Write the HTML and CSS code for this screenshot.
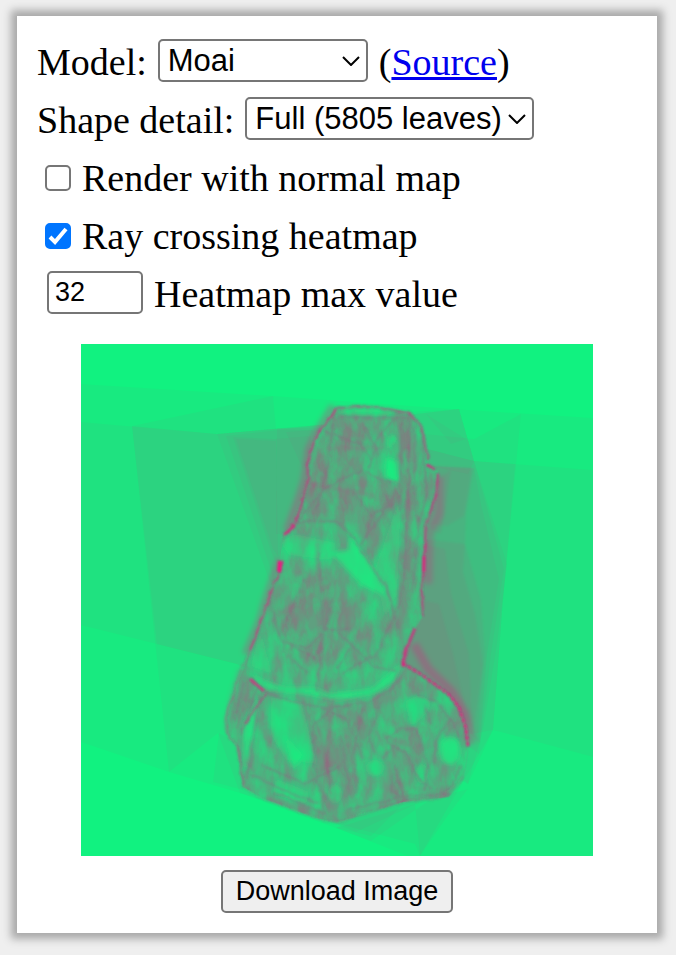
FILE: index.html
```html
<!DOCTYPE html>
<html lang="en">
<head>
<meta charset="utf-8">
<title>Ray crossing heatmap</title>
<link rel="stylesheet" href="styles.css">
</head>
<body>
<main class="panel">
  <form class="controls">
    <div class="row">
      <label for="model">Model:</label>
      <select id="model" class="field select model"><option>Moai</option></select>
      <span>(<a href="#source">Source</a>)</span>
    </div>
    <div class="row">
      <label for="detail">Shape detail:</label>
      <select id="detail" class="field select detail"><option>Full (5805 leaves)</option></select>
    </div>
    <div class="row">
      <input type="checkbox" class="check" id="normals">
      <label for="normals">Render with normal map</label>
    </div>
    <div class="row">
      <input type="checkbox" class="check" id="heat" checked>
      <label for="heat">Ray crossing heatmap</label>
    </div>
    <div class="row">
      <input type="text" inputmode="numeric" class="field number" id="max" value="32">
      <label for="max">Heatmap max value</label>
    </div>
  </form>
  <svg class="render" viewBox="0 0 512 512" role="img" aria-label="Moai heatmap">
    <defs>
      <filter id="soft1" x="-20%" y="-20%" width="140%" height="140%"><feGaussianBlur stdDeviation="1"/></filter>
      <filter id="soft2" x="-20%" y="-20%" width="140%" height="140%"><feGaussianBlur stdDeviation="2.5"/></filter>
      <filter id="hot" x="0" y="0" width="100%" height="100%" color-interpolation-filters="sRGB">
        <feTurbulence type="fractalNoise" baseFrequency="0.07 0.03" numOctaves="4" seed="7"/>
        <feColorMatrix values="0 0 0 0 1  0 0 0 0 0  0 0 0 0 0.5  1.3 0 0 0 -0.45"/>
      </filter>
      <filter id="cool" x="0" y="0" width="100%" height="100%" color-interpolation-filters="sRGB">
        <feTurbulence type="fractalNoise" baseFrequency="0.07 0.035" numOctaves="4" seed="21"/>
        <feColorMatrix values="0 0 0 0 0.07  0 0 0 0 0.95  0 0 0 0 0.5  0 2.2 0 0 -0.8"/>
      </filter>
      <filter id="rough" x="-10%" y="-10%" width="120%" height="120%">
        <feTurbulence type="fractalNoise" baseFrequency="0.12" numOctaves="2" seed="3"/>
        <feDisplacementMap in="SourceGraphic" scale="4" xChannelSelector="R" yChannelSelector="G"/>
        <feGaussianBlur stdDeviation="0.8"/>
      </filter>
      <path id="body" d="M254 63L244 80 232 100 227 123 227 133 221 157 214 180 202 191 199 217 196 233 187 256 181 276 169 306 162 326 146 366 144 386 156 403 159 423 162 443 186 456 232 473 255 479 275 473 322 458 368 453 382 436 387 403 385 384 378 364 368 351 355 339 338 329 322 319 327 299 335 283 341 273 342 256 341 247 343 213 344 182 350 163 355 143 357 127 347 122 342 88 328 68 298 63 275 61Z"/>
      <clipPath id="inside"><use href="#body"/></clipPath>
    </defs>
    <rect width="512" height="512" fill="#11f280"/>
    <!-- bounding volumes: each one crossed adds a step of heat -->
    <g fill="#ff0080" fill-opacity=".033">
      <path d="M0 40L192 52 372 65 512 74V512H327L255 484 159 449 88 428 0 398Z"/>
      <path d="M0 78L136 90 250 80 393 117 512 126V413L412 386 339 400 156 320 76 300 0 281Z"/>
      <path d="M51 82L192 52 195 85 345 90 393 95 440 70 422 256 412 386 339 512 334 500 250 478 159 449 137 389 88 428Z"/>
      <path d="M51 82L136 90 250 80 393 117 434 120 422 256 412 386 387 440 162 326 156 320 76 300Z"/>
      <path d="M136 90L255 79 378 65 393 117 426 220 416 300 402 386 387 440 200 260 187 233Z"/>
      <path d="M145 92L250 80 378 65 393 117 423 225 410 310 398 410 200 260 188 220Z"/>
      <path d="M152 93L194 95 230 92 225 140 197 222 191 210Z"/>
      <path d="M155 95L195 97 197 212 192 205Z"/>
      <path d="M196 84H240L242 90 225 140 204 190 195 190Z"/>
      <path d="M205 88L232 86 222 125Z"/>
      <path d="M328 68L378 65 393 117 387 130 340 120Z"/>
      <path d="M345 70L385 95 370 100Z"/>
      <path d="M138 389L160 400 162 446 132 438Z"/>
      <path d="M255 484L290 497 350 455 387 445 368 470 339 512 334 460Z"/>
      <path d="M255 480L275 488 335 460 368 453 340 450Z"/>
      <path d="M255 484L290 492 322 460 300 455Z"/>
      <path d="M347 122L393 124 400 160 418 235 406 310 399 400 385 384 322 319 342 256Z"/>
    </g>
    <g fill="#ff0080" fill-opacity=".055" filter="url(#soft1)">
      <path d="M347 122L393 124 385 170 384 200 400 256 404 310 400 350 397 400 385 384 322 319 342 256 344 182Z"/>
      <path d="M348 121L391 124 383 172 366 182 345 180Z"/>
      <path d="M343 195L384 200 382 228 394 270 402 320 392 390 368 351 322 319 342 256Z"/>
      <path d="M342 200L364 205 370 250 388 310 391 384 360 340 322 319 341 250Z"/>
      <path d="M342 256L358 260 372 310 388 380 345 330 322 319Z"/>
      <path d="M353 140L370 125 365 160 360 190 345 182Z"/>
    </g>
    <g fill="none" stroke="#ff0080" filter="url(#soft2)">
      <path stroke-opacity=".25" stroke-width="8" d="M252 62L240 82 228 105 224 135 216 160 206 187"/>
      <path stroke-opacity=".25" stroke-width="6" d="M198 215L184 256 178 277 164 310"/>
      <path stroke-opacity=".2" stroke-width="9" d="M358 132L358 170 348 190 347 240"/>
      <path stroke-opacity=".25" stroke-width="9" d="M333 300L347 325 370 347 384 370 390 400"/>
      <path stroke-opacity=".2" stroke-width="5" d="M160 325L150 360 146 386"/>
    </g>
    <use href="#body" fill="#4cb480" filter="url(#soft1)"/>
    <g clip-path="url(#inside)">
      <g fill="#ff0080" fill-opacity=".11" filter="url(#soft2)">
        <path d="M250 68L285 75 280 125 222 155Z"/>
        <path d="M230 128L320 140 316 200 280 195 250 175 215 180Z"/>
        <path d="M317 70H334L337 180 330 250 316 285 318 180Z"/>
        <path d="M200 220L260 225 310 285 270 300 235 335 200 290Z"/>
        <path d="M225 365L285 360 275 450 245 470 232 420Z"/>
        <path d="M310 375L340 385 335 445 315 450Z"/>
        <path d="M160 330L184 348 166 380 160 400 146 386Z"/>
        <path d="M322 322L355 340 330 350 280 370 290 356Z"/>
      </g>
      <rect x="140" y="55" width="255" height="430" filter="url(#hot)" opacity=".35"/>
      <rect x="140" y="55" width="255" height="430" filter="url(#cool)" opacity=".5"/>
      <g fill="#18ed80" filter="url(#soft2)">
        <path fill-opacity=".8" d="M262 64H297L315 69 290 71 262 69Z"/>
        <path fill-opacity=".9" d="M306 113L316 117 318 140 304 132ZM309 91L316 94 306 107Z"/>
        <path fill-opacity=".8" d="M249 208L267 206 269 192 285 213 306 253 281 241Z"/>
        <path fill-opacity=".4" d="M199 198L214 190 255 199 250 216 208 211Z"/>
        <path fill-opacity=".75" d="M165 326L184 337 207 344 235 344 250 350 290 345 322 318 312 338 295 349 258 357 225 350 187 346Z"/>
        <path fill-opacity=".5" d="M190 353L220 358 236 420 205 416 190 390Z"/>
        <path fill-opacity=".8" d="M203 390L222 411 212 426Z"/>
        <path fill-opacity=".7" d="M162 380L173 360 179 352 171 395 164 432Z"/>
        <path fill-opacity=".6" d="M324 358Q342 345 350 360Q343 376 330 382Z"/>
        <ellipse fill-opacity=".8" cx="369" cy="407" rx="10" ry="14"/>
        <ellipse fill-opacity=".55" cx="294" cy="424" rx="9" ry="8"/>
        <ellipse fill-opacity=".5" cx="254" cy="450" rx="7" ry="10"/>
        <ellipse fill-opacity=".5" cx="341" cy="430" rx="6" ry="10"/>
        <path fill-opacity=".5" d="M195 435L228 448 225 460 192 450Z"/>
        <path fill-opacity=".4" d="M179 285L191 330 170 322ZM286 242L304 312 298 280ZM320 150L316 250 304 275 294 225Z"/>
      </g>
      <g fill="none" stroke="#a05080" stroke-opacity=".3" stroke-width="2" filter="url(#rough)">
        <path d="M258 73L326 74M244 88L280 100 291 118M252 79L247 121 236 166M280 126L243 145 216 178M284 82L298 112M313 75L296 95 288 126M328 70V130L325 182 324 225 317 265M334 82L333 150 338 185 331 250M321 78L319 166M341 95L346 150 338 180M284 127L300 137 317 139"/>
        <path d="M214 180L234 177 255 177 271 192 285 213 304 242 310 258M316 146L300 172 280 201M312 160L292 170 284 194M270 145L289 170M304 150L315 170"/>
        <path d="M188 256L200 295 234 315M238 208L242 285 236 348M200 298L226 304 245 286 269 286M211 315L227 330M224 235L207 272 202 310M251 254L238 310M257 288L276 306 292 322 315 328M269 304L256 325M304 236L317 285M315 268L296 310 260 330"/>
        <path d="M185 348L210 357 245 364 288 358 310 345 322 330M179 352L166 434M181 421L224 440 259 422M192 448L245 470M254 362L232 382 234 430 244 470M282 360L273 410 276 450M240 364L265 375 282 415M260 392L269 450M300 358L288 392 294 410"/>
        <path d="M306 395L320 384 336 385 346 420 344 447M308 400L325 408 335 432 350 446M337 351L356 358 370 375 379 395M370 375L355 395 352 420M313 420L322 455 310 446 312 430M263 466L286 461 330 452 370 450M365 448L374 435 380 422M303 390L311 404 302 415M344 360L350 380"/>
        <path d="M170 430L198 444 238 460M163 338L153 376M176 344L160 392M245 408L250 450M238 440L246 456"/>
      </g>
      <g fill="none" stroke="#ff0080" stroke-opacity=".09" stroke-width="5" filter="url(#rough)">
        <path d="M244 104H300M230 140L292 152M328 100L327 240M236 200L240 360M200 270L250 240M238 356L280 356M306 392L328 402M250 370L242 458M315 425L323 450M263 384L275 438M262 470L340 455M186 454L257 476"/>
      </g>
    </g>
    <!-- hot silhouette edges -->
    <g fill="none" stroke="#d42a80" filter="url(#rough)" stroke-linejoin="round">
      <path stroke-opacity=".75" stroke-width="2" d="M254 66L244 80 233 98 227 118 227 134 221 158 214 180"/>
      <path stroke-opacity=".9" stroke-width="3" d="M214 181L203 191"/>
      <path stroke-opacity=".8" stroke-width="2" d="M202 217L196 233 187 256 180 279 169 306"/>
      <path stroke-opacity=".3" stroke-width="2" d="M169 306L161 324 152 350 146 368 145 389"/>
      <path stroke-opacity=".4" stroke-width="2" d="M252 65L274 63 298 63 328 69"/>
      <path stroke-opacity=".6" stroke-width="2" d="M328 69L341 84 347 116"/>
      <path stroke-opacity=".9" stroke-width="3" d="M346 121L355 125"/>
      <path stroke-opacity=".75" stroke-width="2" d="M357 130L355 148 350 166 345 180 343 213 341 250 342 273"/>
      <path stroke-opacity=".85" stroke-width="3" d="M334 284L327 301 322 318"/>
      <path stroke-opacity=".4" stroke-width="2" d="M145 388L157 404 160 425 163 443"/>
      <path stroke-opacity=".15" stroke-width="2" d="M162 444L186 456 232 473 255 479 280 470 322 458 360 454 382 433"/>
      <path stroke-opacity=".6" stroke-width="2" d="M186 349L173 366 164 380"/>
    </g>
    <g fill="none" stroke="#ed127f" filter="url(#soft1)">
      <path stroke-width="4" d="M199 217L198 228"/>
      <path stroke-width="3" stroke-opacity=".7" d="M169 335L183 347M343 212V228M322 316V323"/>
      <path stroke-width="3" stroke-opacity=".75" stroke-dasharray="5 1" d="M321 319L338 329 355 341 368 351 378 364 385 384 387 403"/>
    </g>
  </svg>
  <button type="button" class="field download">Download Image</button>
</main>
</body>
</html>
```
FILE: styles.css
```css
* {
  box-sizing: border-box;
}

body {
  margin: 0;
  padding: 16px 19px 22px 17px;
  background: #efefef;
  color: #000;
  font-family: "Liberation Serif", serif;
  font-size: 38px;
}

.panel {
  display: flex;
  flex-direction: column;
  align-items: center;
  padding: 17px 20px 20px;
  background: #fff;
  box-shadow: 0 0 8px 6px #a9a9a9;
}

.controls {
  align-self: stretch;
  margin-bottom: 21px;
}

.row {
  display: flex;
  align-items: center;
  gap: 11px;
  line-height: 58px;
}

.row .field {
  margin-bottom: 3px;
}

a {
  color: #00e;
}

.field {
  height: 43px;
  margin: 0;
  border: 2px solid #767676;
  border-radius: 5px;
  background: #fff;
  color: #000;
  font: 27px "Liberation Sans", sans-serif;
}

.select {
  appearance: none;
  padding: 0 30px 0 8px;
  background: #fff url("data:image/svg+xml,%3Csvg xmlns='http://www.w3.org/2000/svg' width='18' height='10'%3E%3Cpath d='M1 1l8 8 8-8' fill='none' stroke='%23000' stroke-width='2'/%3E%3C/svg%3E") no-repeat right 6px center;
  font-size: 31px;
}

.model {
  width: 210px;
}

.check {
  appearance: none;
  width: 26px;
  height: 26px;
  margin: 0 0 0 8px;
  border: 2px solid #767676;
  border-radius: 5px;
  background: #fff;
}

.check:checked {
  border-color: #0075ff;
  background: #0075ff url("data:image/svg+xml,%3Csvg xmlns='http://www.w3.org/2000/svg' width='22' height='22'%3E%3Cpath d='M3 12l5 5L19 4' fill='none' stroke='%23fff' stroke-width='4'/%3E%3C/svg%3E") center no-repeat;
}

.number {
  width: 96px;
  margin-left: 10px;
  padding: 0 6px;
}

.render {
  display: block;
  width: 100%;
  max-width: 512px;
}

.download {
  margin-top: 14px;
  padding: 0 13px;
  background: #efefef;
}
```
